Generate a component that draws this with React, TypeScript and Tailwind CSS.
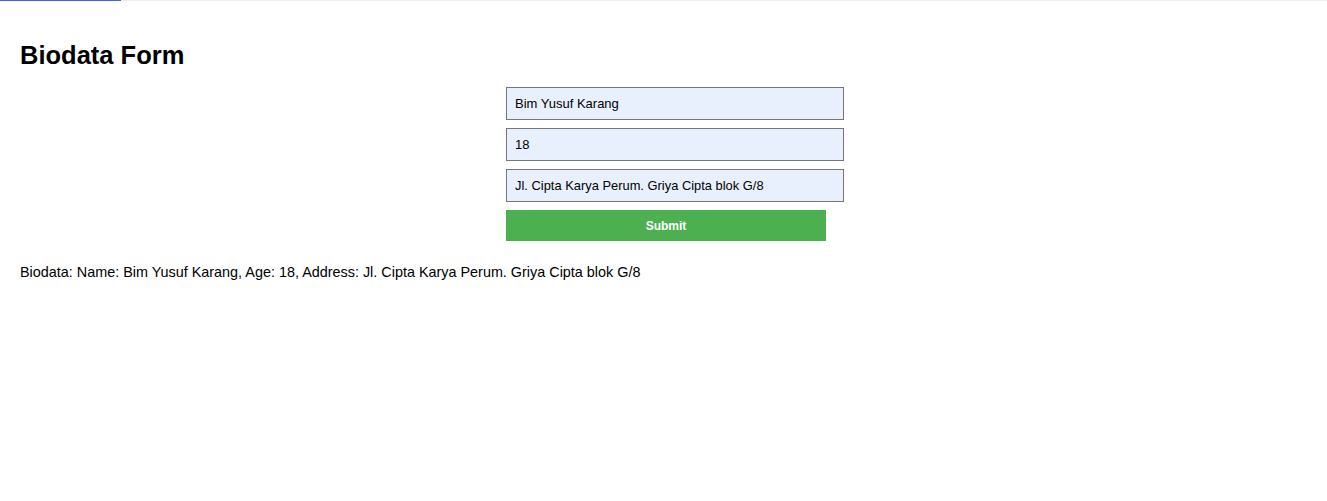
export default function App() {
  return (
    <div className="relative min-h-[501px] bg-white" style={{ fontFamily: '"Liberation Sans", Arial, sans-serif' }}>
      <div className="h-px w-full bg-[#f0f0f0]">
        <div className="h-px w-[121px] bg-[#4a5cf0]" />
      </div>
      <div className="px-5">
        <h2 className="pt-[39px] text-[25.5px] font-bold leading-[30px] text-black">Biodata Form</h2>
        <form className="ml-[486px] mt-[17px] flex w-[338px] flex-col" onSubmit={(e) => e.preventDefault()}>
          <input
            className="mb-2 h-[33px] w-[338px] border border-[#767676] bg-[#e8f0fe] px-2 text-[13px] text-black outline-none"
            defaultValue="Bim Yusuf Karang"
          />
          <input
            className="mb-2 h-[33px] w-[338px] border border-[#767676] bg-[#e8f0fe] px-2 text-[13px] text-black outline-none"
            defaultValue="18"
          />
          <input
            className="mb-2 h-[33px] w-[338px] border border-[#767676] bg-[#e8f0fe] px-2 text-[12.9px] text-black outline-none"
            defaultValue="Jl. Cipta Karya Perum. Griya Cipta blok G/8"
          />
          <button type="submit" className="h-[31px] w-[320px] bg-[#4caf50] text-[12px] font-bold text-white">
            Submit
          </button>
        </form>
        <p className="mt-[21px] text-[14.4px] leading-[20px] text-black">
          Biodata: Name: Bim Yusuf Karang, Age: 18, Address: Jl. Cipta Karya Perum. Griya Cipta blok G/8
        </p>
      </div>
    </div>
  );
}
